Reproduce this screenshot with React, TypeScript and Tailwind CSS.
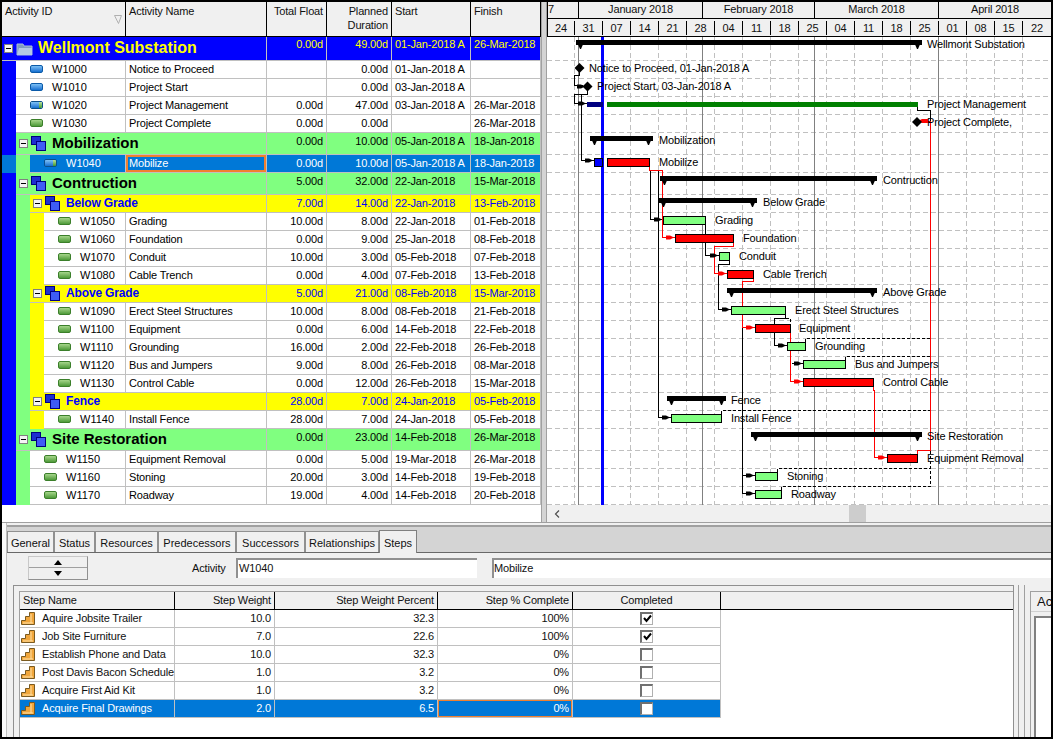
import React from "react";

type Row = {
  kind: "project" | "wbs1" | "wbs2" | "act";
  depth: number;
  id?: string;
  name: string;
  float: string;
  dur: string;
  start: string;
  finish: string;
  icon?: "blue" | "green" | "both";
  selected?: boolean;
};

const act = (depth: number, id: string, name: string, float: string, dur: string, start: string, finish: string, icon: "blue" | "green" | "both" = "green", selected = false): Row => ({ kind: "act", depth, id, name, float, dur, start, finish, icon, selected });

const rows: Row[] = [
  { kind: "project", depth: 0, name: "Wellmont Substation", float: "0.00d", dur: "49.00d", start: "01-Jan-2018 A", finish: "26-Mar-2018" },
  act(1, "W1000", "Notice to Proceed", "", "0.00d", "01-Jan-2018 A", "", "blue"),
  act(1, "W1010", "Project Start", "", "0.00d", "03-Jan-2018 A", "", "blue"),
  act(1, "W1020", "Project Management", "0.00d", "47.00d", "03-Jan-2018 A", "26-Mar-2018", "both"),
  act(1, "W1030", "Project Complete", "0.00d", "0.00d", "", "26-Mar-2018"),
  { kind: "wbs1", depth: 1, name: "Mobilization", float: "0.00d", dur: "10.00d", start: "05-Jan-2018 A", finish: "18-Jan-2018" },
  act(2, "W1040", "Mobilize", "0.00d", "10.00d", "05-Jan-2018 A", "18-Jan-2018", "both", true),
  { kind: "wbs1", depth: 1, name: "Contruction", float: "5.00d", dur: "32.00d", start: "22-Jan-2018", finish: "15-Mar-2018" },
  { kind: "wbs2", depth: 2, name: "Below Grade", float: "7.00d", dur: "14.00d", start: "22-Jan-2018", finish: "13-Feb-2018" },
  act(3, "W1050", "Grading", "10.00d", "8.00d", "22-Jan-2018", "01-Feb-2018"),
  act(3, "W1060", "Foundation", "0.00d", "9.00d", "25-Jan-2018", "08-Feb-2018"),
  act(3, "W1070", "Conduit", "10.00d", "3.00d", "05-Feb-2018", "07-Feb-2018"),
  act(3, "W1080", "Cable Trench", "0.00d", "4.00d", "07-Feb-2018", "13-Feb-2018"),
  { kind: "wbs2", depth: 2, name: "Above Grade", float: "5.00d", dur: "21.00d", start: "08-Feb-2018", finish: "15-Mar-2018" },
  act(3, "W1090", "Erect Steel Structures", "10.00d", "8.00d", "08-Feb-2018", "21-Feb-2018"),
  act(3, "W1100", "Equipment", "0.00d", "6.00d", "14-Feb-2018", "22-Feb-2018"),
  act(3, "W1110", "Grounding", "16.00d", "2.00d", "22-Feb-2018", "26-Feb-2018"),
  act(3, "W1120", "Bus and Jumpers", "9.00d", "8.00d", "26-Feb-2018", "08-Mar-2018"),
  act(3, "W1130", "Control Cable", "0.00d", "12.00d", "26-Feb-2018", "15-Mar-2018"),
  { kind: "wbs2", depth: 2, name: "Fence", float: "28.00d", dur: "7.00d", start: "24-Jan-2018", finish: "05-Feb-2018" },
  act(3, "W1140", "Install Fence", "28.00d", "7.00d", "24-Jan-2018", "05-Feb-2018"),
  { kind: "wbs1", depth: 1, name: "Site Restoration", float: "0.00d", dur: "23.00d", start: "14-Feb-2018", finish: "26-Mar-2018" },
  act(2, "W1150", "Equipment Removal", "0.00d", "5.00d", "19-Mar-2018", "26-Mar-2018"),
  act(2, "W1160", "Stoning", "20.00d", "3.00d", "14-Feb-2018", "19-Feb-2018"),
  act(2, "W1170", "Roadway", "19.00d", "4.00d", "14-Feb-2018", "20-Feb-2018"),
];

const steps = [
  ["Aquire Jobsite Trailer", "10.0", "32.3", "100%", true],
  ["Job Site Furniture", "7.0", "22.6", "100%", true],
  ["Establish Phone and Data", "10.0", "32.3", "0%", false],
  ["Post Davis Bacon Schedule", "1.0", "3.2", "0%", false],
  ["Acquire First Aid Kit", "1.0", "3.2", "0%", false],
  ["Acquire Final Drawings", "2.0", "6.5", "0%", false],
] as const;

const weeks = ["24", "31", "07", "14", "21", "28", "04", "11", "18", "25", "04", "11", "18", "25", "01", "08", "15", "22"];

// row bottoms in page coordinates, used for the chart's dashed lines
const rowLines = [60, 78, 96, 114, 132, 154, 172, 194, 212, 230, 248, 266, 284, 302, 320, 338, 356, 374, 392, 410, 428, 450, 468, 486, 504];
const weekLines = [574, 602, 630, 658, 686, 714, 742, 770, 798, 826, 854, 882, 910, 938, 966, 994, 1022];
const monthLines = [578, 702, 814, 938];

const summaries = [
  [576, 922, 40, "Wellmont Substation", 927],
  [590, 653, 136, "Mobilization", 659],
  [660, 877, 176, "Contruction", 883],
  [659, 757, 198, "Below Grade", 763],
  [727, 877, 288, "Above Grade", 883],
  [667, 726, 396, "Fence", 731],
  [751, 922, 432, "Site Restoration", 927],
] as const;

const bars = [
  [607, 649, 158, "#ff0000", "Mobilize", 659],
  [663, 705, 216, "#80ff80", "Grading", 715],
  [675, 733, 234, "#ff0000", "Foundation", 743],
  [719, 729, 252, "#80ff80", "Conduit", 739],
  [727, 753, 270, "#ff0000", "Cable Trench", 763],
  [731, 785, 306, "#80ff80", "Erect Steel Structures", 795],
  [755, 790, 324, "#ff0000", "Equipment", 799],
  [787, 805, 342, "#80ff80", "Grounding", 815],
  [803, 845, 360, "#80ff80", "Bus and Jumpers", 855],
  [803, 873, 378, "#ff0000", "Control Cable", 883],
  [671, 721, 414, "#80ff80", "Install Fence", 731],
  [887, 917, 454, "#ff0000", "Equipment Removal", 927],
  [755, 777, 472, "#80ff80", "Stoning", 787],
  [755, 781, 490, "#80ff80", "Roadway", 791],
] as const;

const blackLinks = [
  "M579.5 72V75.5H574.5V85.5H583",
  "M587.5 91V94.5H574.5V103.5H587",
  "M581.5 94V160.5H594",
  "M650.5 170.5V219.5H663",
  "M658.5 170.5V417.5H671",
  "M705.5 224V255.5H719",
  "M729.5 260V264.5H718.5V309.5H731",
  "M742.5 282V493.5H755",
  "M742.5 475.5H755",
  "M785.5 314V318.5H774.5V345.5H787",
  "M791.5 363.5H803",
  "M917.5 107V110.5H930.5V121",
];
const redLinks = [
  "M649.5 166V170.5H662.5V237.5H675",
  "M733.5 242V246.5H714.5V273.5H727",
  "M753.5 278V281.5H742.5V327.5H755",
  "M790.5 332V381.5H803",
  "M873.5 386V390.5H874.5V457.5H887",
  "M917.5 454V450.5H930.5V121.5H922",
];
const dashedLinks = [
  "M785.5 318.5H790.5V335",
  "M805.5 342V338.5H930",
  "M845.5 360V356.5H930",
  "M721.5 414V410.5H930",
  "M777.5 472V468.5H930.5",
  "M781.5 490V486.5H930.5V450",
];
const arrows = [
  [587, 103.5, "#000"], [594, 160.5, "#000"], [663, 219.5, "#000"], [675, 237.5, "#ff0000"],
  [719, 255.5, "#000"], [727, 273.5, "#ff0000"], [731, 309.5, "#000"], [755, 327.5, "#ff0000"],
  [787, 345.5, "#000"], [803, 363.5, "#000"], [803, 381.5, "#ff0000"], [671, 417.5, "#000"],
  [887, 457.5, "#ff0000"], [755, 475.5, "#000"], [755, 493.5, "#000"], [586, 86.5, "#000"],
] as const;

function Minus() {
  return (
    <span className="w-[9px] h-[9px] border border-[#808080] bg-[#f4f4f4] flex items-center justify-center shrink-0">
      <span className="w-[5px] h-px bg-black" />
    </span>
  );
}

function Folder() {
  return (
    <svg width="17" height="15" viewBox="0 0 17 15" className="shrink-0">
      <path d="M1 3h6l1 2h8v9H1z" fill="#7f9cc0" stroke="#a9bdd8" />
      <path d="M1 14l2-7h13v7z" fill="#b4c8e4" />
    </svg>
  );
}

function Stack() {
  return (
    <svg width="15" height="15" viewBox="0 0 15 15" className="shrink-0">
      <rect x="0.5" y="0.5" width="9" height="8" fill="#1c2fd0" stroke="#000080" />
      <rect x="5.5" y="5.5" width="9" height="9" fill="#3f5cf5" stroke="#000080" />
    </svg>
  );
}

function Pill({ icon }: { icon: "blue" | "green" | "both" }) {
  if (icon === "both") {
    return (
      <span className="flex w-[13px] h-[8px] rounded-[2px] overflow-hidden shrink-0 border border-[#0b4f8a]">
        <span className="w-[8px] bg-gradient-to-b from-[#7cc0f5] to-[#0f6fd0]" />
        <span className="flex-1 bg-gradient-to-b from-[#b9e29a] to-[#3f9a2c]" />
      </span>
    );
  }
  return (
    <span
      className={
        icon === "blue"
          ? "w-[13px] h-[8px] rounded-[2px] shrink-0 border border-[#0b5aa8] bg-gradient-to-b from-[#7cc0f5] to-[#0f6fd0]"
          : "w-[13px] h-[8px] rounded-[2px] shrink-0 border border-[#3b7f2a] bg-gradient-to-b from-[#a6d68a] to-[#4d9a38]"
      }
    />
  );
}

function Stairs() {
  return (
    <svg width="14" height="14" viewBox="0 0 14 14" className="shrink-0">
      <path d="M0.5 13.5V9.5H4.5V5.5H8.5V1.5H13.5V13.5Z" fill="#f0a63c" stroke="#7a5a20" />
      <path d="M2 12h10M10 3v9" stroke="#ffe2a8" />
    </svg>
  );
}

function TreeRow({ row }: { row: Row }) {
  const isAct = row.kind === "act";
  const sel = row.selected;
  const tone =
    row.kind === "project"
      ? "bg-[#0000ff] text-[#ffff00]"
      : row.kind === "wbs1"
        ? "bg-[#80ff80] text-black"
        : row.kind === "wbs2"
          ? "bg-[#ffff00] text-[#0000ff]"
          : sel
            ? "bg-[#0078d7] text-white"
            : "bg-white text-black";
  const height = row.kind === "project" ? "h-[24px]" : row.kind === "wbs1" ? "h-[22px]" : "h-[18px]";
  const align = isAct ? "items-center pb-[2px]" : row.kind === "wbs2" ? "items-center pb-px" : row.kind === "project" ? "items-start" : "items-start pt-px";
  const cell = `h-full flex ${align} border-r border-b border-[#c0c0c0] ${tone}`;
  return (
    <div className={`flex ${height}`}>
      {row.depth > 0 && <div className={sel ? "w-[14px] bg-[#0078d7]" : "w-[14px] bg-[#0000ff]"} />}
      {row.depth > 1 && <div className="w-[14px] bg-[#80ff80]" />}
      {row.depth > 2 && <div className="w-[14px] bg-[#ffff00]" />}
      {isAct ? (
        <>
          <div
            className={`${cell} tracking-normal ${row.depth === 1 ? "w-[110px] pl-[14px]" : row.depth === 2 ? "w-[96px] pl-[14px]" : "w-[82px] pl-[14px]"}`}
          >
            <span className="mt-px flex">
              <Pill icon={row.icon!} />
            </span>
            <span className="ml-[9px]">{row.id}</span>
          </div>
          <div className={`${cell} w-[141px] pl-[3px] relative`}>
            {sel && <span className="absolute left-0 right-0 top-0 bottom-0 border-2 border-[#f08030]" />}
            {row.name}
          </div>
        </>
      ) : (
        <div
          className={`h-full flex items-center border-r border-b border-[#c0c0c0] ${tone} ${row.kind === "project" ? "w-[265px] pl-[2px]" : row.kind === "wbs1" ? "w-[251px] pl-[3px]" : "w-[237px] pl-[3px]"}`}
        >
          <Minus />
          <span className="ml-[3px]">{row.kind === "project" ? <Folder /> : <Stack />}</span>
          <span
            className={`font-bold ${row.kind === "project" ? "ml-[5px] text-[16px] tracking-normal -mt-[2px]" : row.kind === "wbs1" ? "ml-[6px] text-[15px] tracking-normal -mt-[2px]" : "ml-[6px] text-[12px] -mt-px"}`}
          >
            {row.name}
          </span>
        </div>
      )}
      <div className={`${cell} w-[60px] justify-end pr-[3px]`}>{row.float}</div>
      <div className={`${cell} w-[65px] justify-end pr-[3px]`}>{row.dur}</div>
      <div className={`${cell} w-[79px] pl-[3px]`}>{row.start}</div>
      <div className={`${cell} w-[70px] pl-[3px]`}>{row.finish}</div>
    </div>
  );
}

function GanttChart() {
  return (
    <svg viewBox="547 37 504 468" width="504" height="468" className="block">
      <g shapeRendering="crispEdges">
        {rowLines.map((y) => (
          <line key={y} x1="547" x2="1051" y1={y + 0.5} y2={y + 0.5} stroke="#c0c0c0" strokeDasharray="5 3" />
        ))}
        {weekLines.map((x) => (
          <line key={x} x1={x + 0.5} x2={x + 0.5} y1="37" y2="505" stroke="#c0c0c0" strokeDasharray="5 3" />
        ))}
        {monthLines.map((x) => (
          <line key={x} x1={x + 0.5} x2={x + 0.5} y1="37" y2="505" stroke="#808080" />
        ))}
        <rect x="601" y="37" width="3" height="468" fill="#0000ff" />
        {dashedLinks.map((d) => (
          <path key={d} d={d} fill="none" stroke="#000" strokeDasharray="3 2" />
        ))}
        {blackLinks.map((d) => (
          <path key={d} d={d} fill="none" stroke="#000" />
        ))}
        {redLinks.map((d) => (
          <path key={d} d={d} fill="none" stroke="#ff0000" />
        ))}
        <rect x="587" y="102" width="16" height="5" fill="#000080" />
        <rect x="607" y="102" width="311" height="5" fill="#008000" />
        <rect x="594.5" y="158.5" width="8" height="8" fill="#0000ff" stroke="#000" />
        {summaries.map(([x1, x2, y]) => (
          <rect key={`${x1}-${y}`} x={x1} y={y} width={x2 - x1} height="5" fill="#000" />
        ))}
        {bars.map(([x1, x2, y, fill]) => (
          <rect key={`${x1}-${y}`} x={x1 + 0.5} y={y + 0.5} width={x2 - x1} height="8" fill={fill} stroke="#000" />
        ))}
      </g>
      {summaries.map(([x1, x2, y]) => (
        <g key={`t${x1}-${y}`} fill="#000">
          <polygon points={`${x1},${y} ${x1 + 9},${y} ${x1 + 5},${y + 9} ${x1 + 4},${y + 9}`} />
          <polygon points={`${x2 - 9},${y} ${x2},${y} ${x2 - 4},${y + 9} ${x2 - 5},${y + 9}`} />
        </g>
      ))}
      {arrows.map(([x, y, c]) => (
        <polygon key={`${x}-${y}`} points={`${x - 9},${y - 2} ${x - 5},${y - 2} ${x - 1},${y} ${x - 5},${y + 2} ${x - 9},${y + 2}`} fill={c} />
      ))}
      <polygon points="920,120 922,119 928,119 928,123 922,123 920,122" fill="#ff0000" />
      <polygon points="579.5,63 584.5,68 579.5,73 574.5,68" fill="#000" />
      <polygon points="587.5,81.5 592.5,86.5 587.5,91.5 582.5,86.5" fill="#000" />
      <polygon points="917,117 922,122 917,127 912,122" fill="#000" />
      <g fontSize="11" fill="#000">
        <text x="589" y="72">Notice to Proceed, 01-Jan-2018 A</text>
        <text x="597" y="90">Project Start, 03-Jan-2018 A</text>
        <text x="927" y="108">Project Management</text>
        <text x="927" y="126">Project Complete,</text>
        {summaries.map(([, , y, label, lx]) => (
          <text key={label} x={lx} y={y + 8}>
            {label}
          </text>
        ))}
        {bars.map(([, , y, , label, lx]) => (
          <text key={label} x={lx} y={y + 8}>
            {label}
          </text>
        ))}
      </g>
    </svg>
  );
}

function Check({ on }: { on: boolean }) {
  return (
    <span className="w-[13px] h-[13px] flex items-center justify-center bg-white border-t-2 border-l-2 border-r border-b border-t-[#707070] border-l-[#707070] border-r-[#b0b0b0] border-b-[#b0b0b0]">
      {on && (
        <svg width="9" height="9" viewBox="0 0 9 9">
          <path d="M1 4l2.5 3L8 1.5" fill="none" stroke="#000" strokeWidth="2" />
        </svg>
      )}
    </span>
  );
}

export default function App() {
  const hdr = "h-full border-r border-black px-[3px] pt-[2px]";
  const stepHdr = "h-full flex items-center pb-[2px] border-r border-black px-[3px]";
  const stepCell = "h-full flex items-center pb-px border-r border-b border-[#c0c0c0] px-[3px]";
  return (
    <div
      className="w-[1053px] h-[739px] border-2 border-black bg-white overflow-hidden flex flex-col text-[11px] leading-[14px] tracking-[-0.15px] text-[#111]"
      style={{ fontFamily: '"Liberation Sans", Arial, sans-serif' }}
    >
      <div className="flex h-[520px] shrink-0">
        {/* Activity table */}
        <div className="w-[539px] shrink-0">
          <div className="flex h-[35px] bg-[#f0f0f0] border-b border-black">
            <div className={`${hdr} w-[124px] relative`}>
              Activity ID
              <svg width="8" height="9" viewBox="0 0 8 9" className="absolute right-[3px] top-[13px]">
                <path d="M0.5 0.5H7.5L4.5 8.5Z" fill="none" stroke="#b0b0b0" />
              </svg>
            </div>
            <div className={`${hdr} w-[141px]`}>Activity Name</div>
            <div className={`${hdr} w-[60px] text-right`}>Total Float</div>
            <div className={`${hdr} w-[65px] text-right`}>
              Planned
              <br />
              Duration
            </div>
            <div className={`${hdr} w-[79px]`}>Start</div>
            <div className={`${hdr} w-[70px]`}>Finish</div>
          </div>
          {rows.map((r) => (
            <TreeRow key={r.name + (r.id ?? "")} row={r} />
          ))}
        </div>

        {/* Splitter */}
        <div className="w-[6px] shrink-0 bg-[#d4d4d4] border-x border-[#a0a0a0]" />

        {/* Gantt */}
        <div className="w-[504px] shrink-0 flex flex-col">
          <div className="h-[35px] bg-[#f0f0f0] border-b border-black border-l border-l-black text-center">
            <div className="flex h-[17px] border-b border-black">
              <div className="w-[31px] border-r border-black text-left">7</div>
              <div className="w-[124px] border-r border-black">January 2018</div>
              <div className="w-[112px] border-r border-black">February 2018</div>
              <div className="w-[124px] border-r border-black">March 2018</div>
              <div className="flex-1">April 2018</div>
            </div>
            <div className="flex h-[17px] items-center">
              {weeks.map((w, i) => (
                <div key={i} className={i === 0 ? "w-[27px] border-r border-black" : i === 17 ? "flex-1" : "w-[28px] border-r border-black"}>
                  {w}
                </div>
              ))}
            </div>
          </div>
          <GanttChart />
          <div className="h-[17px] flex bg-[#f0f0f0] items-center">
            <div className="w-[17px] flex justify-center ml-px">
              <svg width="6" height="8" viewBox="0 0 6 8">
                <path d="M5 0.5L1.5 4L5 7.5" fill="none" stroke="#505050" strokeWidth="1.2" />
              </svg>
            </div>
            <div className="ml-[284px] w-[17px] h-full bg-[#cdcdcd]" />
          </div>
        </div>
      </div>

      {/* Detail pane */}
      <div className="flex-1 flex min-h-0 border-t border-[#a0a0a0] bg-[#f0f0f0]">
        <div className="w-[4px] shrink-0 bg-[#fafafa]" />
        <div className="flex-1 min-w-0 flex flex-col border-l border-[#c0c0c0]">
          <div className="h-[2px] shrink-0" />
          <div className="h-[28px] shrink-0 bg-[#d4d4d4] border-t-2 border-[#a0a0a0] border-b border-b-[#696969] flex items-end tracking-normal">
            {[
              ["General", "w-[47px]"],
              ["Status", "w-[41px]"],
              ["Resources", "w-[63px]"],
              ["Predecessors", "w-[78px]"],
              ["Successors", "w-[69px]"],
              ["Relationships", "w-[74px]"],
            ].map(([t, w]) => (
              <div key={t} className={`${w} h-[21px] pt-px bg-[#f0f0f0] border-t border-l border-r border-[#909090] flex items-center justify-center`}>
                {t}
              </div>
            ))}
            <div className="w-[38px] h-[23px] -mb-px pt-px bg-[#f0f0f0] border-t border-l border-r border-[#808080] flex items-center justify-center">Steps</div>
          </div>

          <div className="h-[32px] shrink-0 flex items-center pb-[2px]">
            <div className="ml-[21px] w-[60px] h-[24px] flex flex-col border border-[#c8c8c8] border-r-[#909090] border-b-[#909090] shrink-0">
              <div className="h-1/2 flex items-center justify-center border-b border-[#a0a0a0]">
                <svg width="8" height="5" viewBox="0 0 8 5"><path d="M4 0L8 5H0Z" /></svg>
              </div>
              <div className="h-1/2 flex items-center justify-center">
                <svg width="8" height="5" viewBox="0 0 8 5"><path d="M4 5L8 0H0Z" /></svg>
              </div>
            </div>
            <span className="ml-[104px] w-[44px] shrink-0">Activity</span>
            <div className="w-[241px] h-[20px] shrink-0 bg-white border-l-2 border-t-2 border-[#909090] pl-[1px] pb-[2px] flex items-center">W1040</div>
            <div className="ml-[15px] flex-1 h-[20px] bg-white border-l-2 border-t-2 border-[#909090] pb-[2px] flex items-center">Mobilize</div>
          </div>

          <div className="flex-1 min-h-0 flex pl-[6px]">
            <div className="w-[1001px] shrink-0 border-l border-t border-r border-[#909090] pl-[5px] pt-[5px] flex">
              <div className="flex-1 bg-white border-l border-t border-[#a0a0a0]">
                <div className="flex h-[18px] bg-[#f0f0f0] border-b border-black">
                  <div className={`${stepHdr} w-[155px]`}>Step Name</div>
                  <div className={`${stepHdr} w-[100px] justify-end`}>Step Weight</div>
                  <div className={`${stepHdr} w-[163px] justify-end`}>Step Weight Percent</div>
                  <div className={`${stepHdr} w-[135px] justify-end`}>Step % Complete</div>
                  <div className={`${stepHdr} w-[148px] justify-center`}>Completed</div>
                </div>
                {steps.map(([name, weight, pct, complete, done], i) => {
                  const sel = i === steps.length - 1;
                  const tone = sel ? "bg-[#0078d7] text-white" : "text-[#111]";
                  return (
                    <div key={name} className="flex h-[18px]">
                      <div className={`${stepCell} ${tone} w-[155px] !pl-[1px] !pr-0 whitespace-nowrap`}>
                        <Stairs />
                        <span className="ml-[7px]">{name}</span>
                      </div>
                      <div className={`${stepCell} ${tone} w-[100px] justify-end`}>{weight}</div>
                      <div className={`${stepCell} ${tone} w-[163px] justify-end`}>{pct}</div>
                      <div className={`${stepCell} ${tone} w-[135px] justify-end relative`}>
                        {sel && <span className="absolute left-0 right-0 top-0 bottom-0 border border-[#f08030]" />}
                        {complete}
                      </div>
                      <div className={`${stepCell} ${tone} w-[148px] justify-center`}>
                        <Check on={done} />
                      </div>
                    </div>
                  );
                })}
              </div>
            </div>
            <div className="w-[7px] shrink-0 ml-[4px] border-x border-[#a0a0a0]" />
            <div className="flex-1 ml-[5px] mt-[6px] border-l border-t border-[#a0a0a0] flex flex-col pl-[3px] min-w-0">
              <div className="h-[20px] shrink-0 -ml-[3px] pl-[6px] flex items-center text-[13px] tracking-normal border-b border-[#d0d0d0] overflow-hidden">Ac</div>
              <div className="flex-1 mt-[4px] bg-white border-l-2 border-t-2 border-[#808080]" />
            </div>
          </div>
        </div>
      </div>
    </div>
  );
}
